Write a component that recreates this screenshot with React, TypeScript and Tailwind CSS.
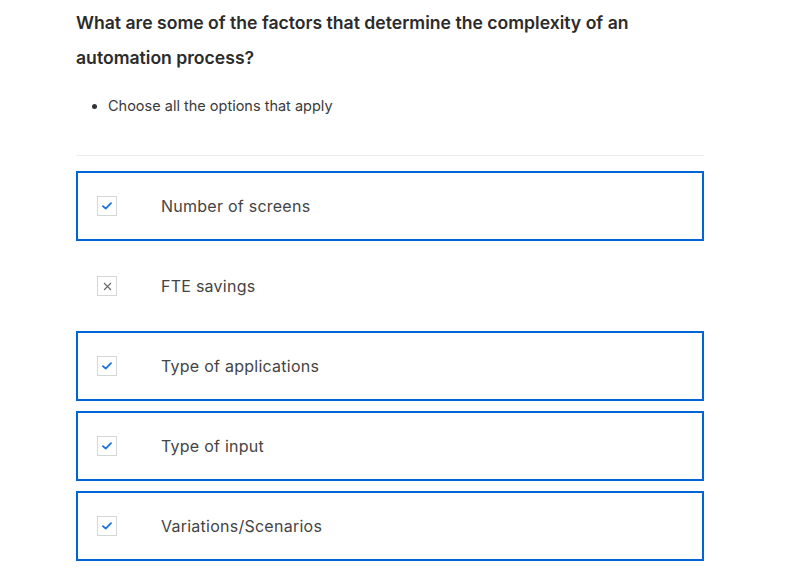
import React from 'react';

const options = [
  { label: 'Number of screens', correct: true },
  { label: 'FTE savings', correct: false },
  { label: 'Type of applications', correct: true },
  { label: 'Type of input', correct: true },
  { label: 'Variations/Scenarios', correct: true },
];

function Mark({ correct }: { correct: boolean }) {
  return (
    <div className="w-5 h-5 border border-[#d6d6d6] bg-white flex items-center justify-center shrink-0">
      {correct ? (
        <svg width="10" height="8" viewBox="0 0 10 8" fill="none">
          <path d="M1 4.2 L3.8 6.6 L9 1.2" stroke="#1a73e8" strokeWidth="1.8" strokeLinecap="round" strokeLinejoin="round" />
        </svg>
      ) : (
        <svg width="9" height="9" viewBox="0 0 9 9" fill="none">
          <path d="M1 1 L8 8 M8 1 L1 8" stroke="#666" strokeWidth="1.1" />
        </svg>
      )}
    </div>
  );
}

export default function App() {
  return (
    <div className="w-[792px] h-[572px] bg-white overflow-hidden font-['Inter','Liberation_Sans',sans-serif]">
      <div className="ml-[76px] w-[628px]">
        <h2 className="pt-[5px] text-[17.6px] leading-[35px] font-semibold text-[#2b2b2b]">
          What are some of the factors that determine the complexity of an
          <br />
          automation process?
        </h2>

        {/* Instructions */}
        <ul className="mt-[21px] pl-[32px] list-disc text-[14.5px] leading-[20px] text-[#3a3a3a] marker:text-[#333]">
          <li>Choose all the options that apply</li>
        </ul>

        <div className="mt-[39px] border-t border-[#ebebeb]" />

        <div className="mt-[15px] flex flex-col gap-[10px]">
          {options.map((o) => (
            <div
              key={o.label}
              className={`h-[70px] flex items-center pl-[19px] ${
                o.correct ? 'border-2 border-[#0066d6]' : 'border-2 border-transparent'
              }`}
            >
              <Mark correct={o.correct} />
              <span className="ml-[44px] text-[16px] text-[#444] tracking-[0.25px]">{o.label}</span>
            </div>
          ))}
        </div>
      </div>
    </div>
  );
}
